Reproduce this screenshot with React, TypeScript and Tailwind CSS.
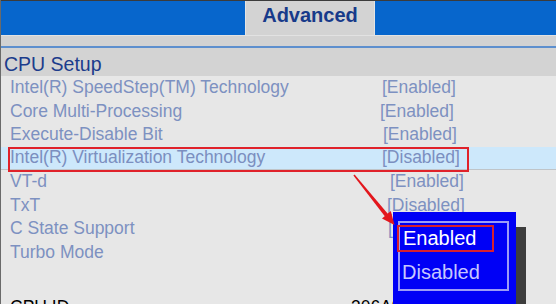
const rows = [
  { label: "Intel(R) SpeedStep(TM) Technology", value: "[Enabled]", gap: "ml-[2px]" },
  { label: "Core Multi-Processing", value: "[Enabled]", gap: "ml-[0px]" },
  { label: "Execute-Disable Bit", value: "[Enabled]", gap: "ml-[3px]" },
  { label: "Intel(R) Virtualization Technology", value: "[Disabled]", gap: "ml-[2px]", selected: true },
  { label: "VT-d", value: "[Enabled]", gap: "ml-[10px]" },
  { label: "TxT", value: "[Disabled]", gap: "ml-[7px]" },
  { label: "C State Support", value: "[Enabled]", gap: "ml-[8px]" },
  { label: "Turbo Mode", value: "", gap: "ml-[8px]" },
];

function SetupRow({ label, value, gap, selected }: { label: string; value: string; gap: string; selected?: boolean }) {
  return (
    <div
      className={
        selected
          ? "relative flex h-[23.5px] items-center bg-[#cde8fb] border-b border-[#bfc4c8] text-[#7b8fc0]"
          : "relative flex h-[23.5px] items-center text-[#7d91c1]"
      }
    >
      <div className="w-[379px] shrink-0 pl-[9px] leading-[23.5px]">{label}</div>
      <div className={`${gap} leading-[23.5px]`}>{value}</div>
      {selected && (
        <div className="absolute left-[7px] top-[0px] h-[25px] w-[461px] border-2 border-[#e0222a]" />
      )}
    </div>
  );
}

function OptionPopup() {
  return (
    <div className="absolute left-[392px] top-[212px] h-[100px] w-[123px] bg-[#0000f6] pl-[5px] pt-[9px] shadow-[10px_15px_0_#3d3d3d]">
      <div className="flex h-[70px] w-[111px] flex-col border-2 border-[#9c9cf6]">
        <div className="-ml-[3px] mt-[2px] h-[27px] w-[97px] border-2 border-[#d8202e] pl-[4px] text-[20px] leading-[23px] text-white">
          Enabled
        </div>
        <div className="mt-[9px] pl-[2px] text-[20px] leading-[23px] text-[#c6c6ff]">Disabled</div>
      </div>
    </div>
  );
}

function PointerArrow() {
  return (
    <svg className="pointer-events-none absolute left-0 top-0" width="556" height="304" viewBox="0 0 556 304">
      <polygon points="352.4,175.4 353.6,174.6 387,214 384,216.4" fill="#e3161c" />
      <polygon points="381,218.4 389.8,211 393.5,225" fill="#e3161c" />
    </svg>
  );
}

export default function App() {
  return (
    <div className="relative h-[304px] w-[556px] overflow-hidden border-l border-[#6a6a6a] bg-[#e7e7e7] font-['Liberation_Sans',Arial,sans-serif]">
      <div className="h-px bg-[#3b3b3b]" />
      <div className="flex h-[34px] bg-[#0766cc]">
        <div className="w-[244px] shrink-0" />
        <div className="w-[130px] border-x border-[#e4e4e4] bg-[#d3d3d3] pt-[4px] text-center text-[20px] font-bold leading-[20px] text-[#173a8a]">
          Advanced
        </div>
      </div>
      <div className="h-[11px] border-t border-[#e2e2e2] bg-[#d2d2d2]" />
      <div className="h-[2px] bg-[#5d8fce]" />
      <div className="h-[28px] bg-[#d3d3d3] pl-[3px] pt-[4px] text-[19.5px] leading-[24px] text-[#1c3c8c]">CPU Setup</div>
      <div className="text-[17.5px]">
        {rows.map((row) => (
          <SetupRow key={row.label} {...row} />
        ))}
        <div className="h-[32px]" />
        <div className="flex h-[23.5px] items-center text-black">
          <div className="w-[350px] shrink-0 pl-[9px] leading-[23.5px]">CPU ID</div>
          <div className="leading-[23.5px]">306A9</div>
        </div>
      </div>
      <OptionPopup />
      <PointerArrow />
    </div>
  );
}
